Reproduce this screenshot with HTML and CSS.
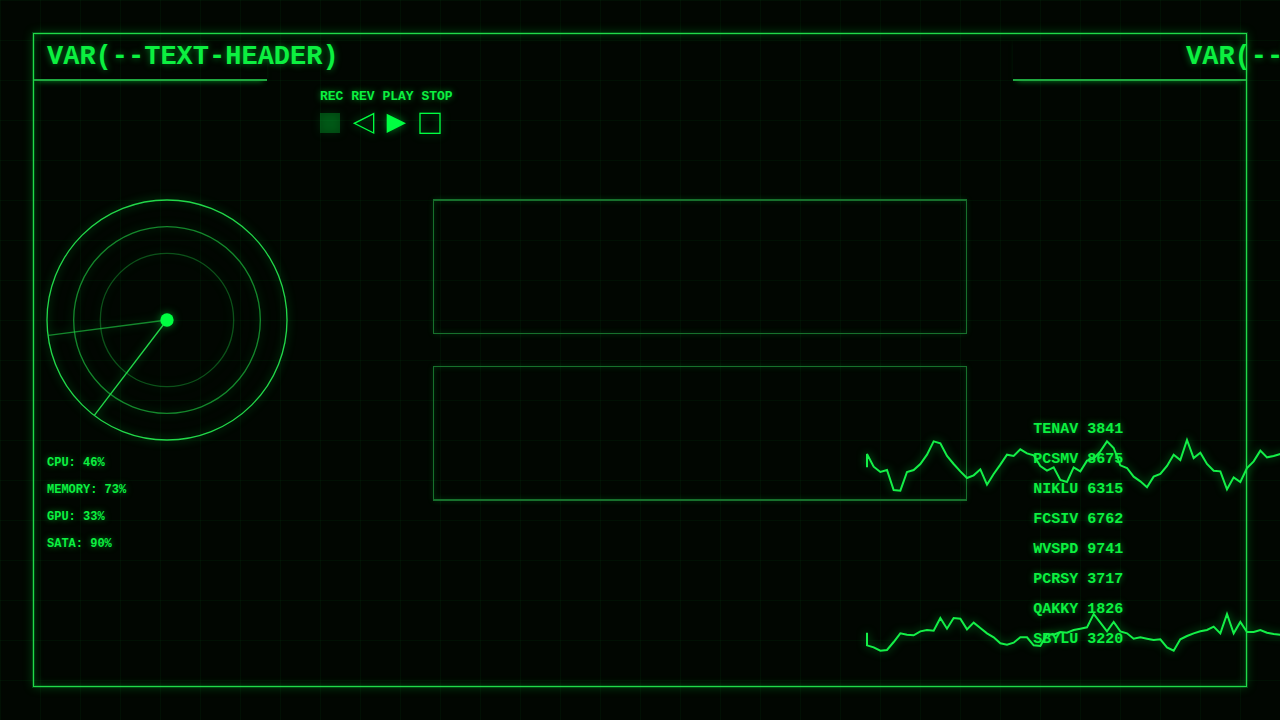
FILE: index.html
```html
<!DOCTYPE html>
<html lang="en">
<head>
<meta charset="utf-8">
<meta name="viewport" content="width=device-width, initial-scale=1">
<title>HUD Terminal</title>
<link rel="stylesheet" href="styles.css">
</head>
<body>
<div class="screen">
  <div class="frame">
    <header class="header">
      <h1 class="title">VAR(--TEXT-HEADER)</h1>
      <h2 class="title title-end">VAR(--TEXT-HEADER)</h2>
    </header>

    <section class="transport" aria-label="Transport">
      <p class="transport-labels">REC REV PLAY STOP</p>
      <div class="transport-buttons">
        <button class="key" type="button" aria-label="Record"><svg viewBox="0 0 30 30"><rect class="rec" width="30" height="30"/></svg></button>
        <button class="key" type="button" aria-label="Reverse"><svg viewBox="0 0 30 30"><path class="outline" d="M31 1V30L2 15.500Z"/></svg></button>
        <button class="key" type="button" aria-label="Play"><svg viewBox="0 0 30 30"><path class="solid" d="M1 1V30L30 15.500Z"/></svg></button>
        <button class="key" type="button" aria-label="Stop"><svg viewBox="0 0 30 30"><rect class="outline" x="1.500" y="0.500" width="30" height="30"/></svg></button>
      </div>
    </section>

    <main class="main">
      <section class="system">
        <svg class="radar" viewBox="0 0 360 360" role="img" aria-label="Radar">
          <circle class="ring" cx="180" cy="180" r="180"/>
          <circle class="ring ring-mid" cx="180" cy="180" r="140"/>
          <circle class="ring ring-inner" cx="180" cy="180" r="100"/>
          <path class="ring ring-mid" d="M180 180L2 203"/>
          <path class="ring" d="M180 180L71 323"/>
          <circle class="solid" cx="180" cy="180" r="10"/>
        </svg>
        <ul class="stats">
          <li>CPU: 46%</li>
          <li>MEMORY: 73%</li>
          <li>GPU: 33%</li>
          <li>SATA: 90%</li>
        </ul>
      </section>

      <section class="panels">
        <div class="panel"></div>
        <div class="panel"></div>
      </section>

      <ul class="codes">
        <li>TENAV 3841</li>
        <li>PCSMV 8675</li>
        <li>NIKLU 6315</li>
        <li>FCSIV 6762</li>
        <li>WVSPD 9741</li>
        <li>PCRSY 3717</li>
        <li>QAKKY 1826</li>
        <li>SBYLU 3220</li>
      </ul>

      <div class="waves" aria-hidden="true">
        <svg class="wave" viewBox="0 0 630 120"><polyline points="0,71 0,51 10,70 20,78 30,75 40,105 50,106 60,78 70,75 80,66 90,52 100,32 110,35 120,54 130,66 140,77 150,87 160,83 170,74 180,97 190,81 200,67 210,52 220,54 230,44 240,50 250,53 260,69 270,76 280,71 290,90 300,93 310,71 320,77 330,61 340,58 350,47 360,32 370,42 380,68 390,72 400,85 410,92 420,101 430,85 440,81 450,69 460,52 470,60 480,30 490,57 500,49 510,66 520,76 530,77 540,104 550,86 560,93 570,72 580,62 590,46 600,56 610,54 620,51 630,49"/></svg>
        <svg class="wave" viewBox="0 0 630 120"><polyline points="0,64 0,83 10,86 20,91 30,90 40,78 50,65 60,67 70,68 80,62 90,60 100,61 110,42 120,58 130,42 140,43 150,59 160,49 170,57 180,65 190,71 200,80 210,82 220,79 230,71 240,71 250,83 260,84 270,66 280,67 290,63 300,64 310,60 320,58 330,56 340,36 350,49 360,62 370,48 380,62 390,65 400,73 410,71 420,73 430,75 440,74 450,86 460,91 470,74 480,69 490,65 500,62 510,60 520,55 530,65 540,36 550,65 560,48 570,63 580,63 590,60 600,64 610,66 620,67 630,66"/></svg>
      </div>
    </main>
  </div>
</div>
</body>
</html>
```
FILE: styles.css
```css
:root {
  --green: #00ff41;
  --text: #0cf040;
  --line: #22d84a;
  --glow: rgba(0, 255, 65, 0.5);
}

* { box-sizing: border-box; }

body {
  margin: 0;
  background: #010601;
  color: var(--text);
  font-family: "Courier New", "Liberation Mono", monospace;
  font-weight: 700;
}

h1, h2, p, ul { margin: 0; padding: 0; }
ul { list-style: none; }

.screen {
  display: flex;
  min-height: 100vh;
  padding: 33px;
  overflow: hidden;
  background:
    linear-gradient(rgba(0, 255, 65, 0.04) 1px, transparent 1px) 0 0 / 40px 40px,
    linear-gradient(90deg, rgba(0, 255, 65, 0.04) 1px, transparent 1px) 0 0 / 40px 40px,
    #010601;
}

.frame {
  display: flex;
  flex: 1;
  flex-direction: column;
  min-width: 0;
  border: 1px solid var(--line);
  box-shadow:
    0 0 0 1px rgba(0, 255, 65, 0.2),
    0 0 10px rgba(0, 255, 65, 0.25),
    inset 0 0 0 1px rgba(0, 255, 65, 0.15),
    inset 0 0 10px rgba(0, 255, 65, 0.25);
}

.header {
  display: flex;
  justify-content: space-between;
}

.title {
  width: 233px;
  height: 47px;
  padding-left: 13px;
  border-bottom: 2px solid #1fa83f;
  box-shadow: 0 4px 6px -4px var(--glow);
  font-size: 27px;
  line-height: 46px;
  white-space: nowrap;
  text-shadow: 0 0 7px var(--glow);
}

.title-end { padding-left: 173px; }

.transport {
  display: grid;
  gap: 8px;
  padding: 8px 0 0 286px;
}

.transport-labels {
  font-size: 13px;
  line-height: 16px;
  text-shadow: 0 0 6px var(--glow);
}

.transport-buttons {
  display: flex;
  gap: 13px;
}

.key {
  width: 20px;
  height: 20px;
  padding: 0;
  border: 0;
  background: none;
}

.key svg, .radar, .wave {
  display: block;
  overflow: visible;
  filter: drop-shadow(0 0 4px var(--glow));
}

.rec { fill: var(--green); opacity: 0.24; }
.solid { fill: var(--green); }
.outline { fill: none; stroke: var(--green); stroke-width: 2; }

.main {
  position: relative;
  display: grid;
  flex: 1;
  grid-template-columns: 33fr 44fr 23fr;
  margin-top: 66px;
}

.system { padding-left: 12px; }

.radar { width: 240px; margin: 1px; }
.ring { fill: none; stroke: var(--line); stroke-width: 2; }
.ring-mid { opacity: 0.6; }
.ring-inner { opacity: 0.35; }

.stats {
  margin-top: 10px;
  padding-left: 1px;
  font-size: 12px;
  line-height: 27px;
  text-shadow: 0 0 6px var(--glow);
}

.panels {
  display: flex;
  flex-direction: column;
  gap: 32px;
  margin-left: -1px;
}

.panel {
  height: 135px;
  border: solid #17702c;
  border-width: 2px 1px 1px;
  box-shadow: 0 0 6px rgba(0, 255, 65, 0.15), inset 0 0 6px rgba(0, 255, 65, 0.15);
}

.panel + .panel { border-width: 1px 1px 2px; }

.codes {
  align-self: end;
  padding: 0 0 31px 66px;
  font-size: 15px;
  line-height: 30px;
  white-space: nowrap;
  text-shadow: 0 0 6px var(--glow);
}

/* Signal traces run over the panels and past the frame edge. */
.waves {
  position: absolute;
  top: 221px;
  left: 833px;
  display: grid;
  gap: 90px;
}

.wave { width: 420px; height: 80px; }
.wave polyline {
  fill: none;
  stroke: #14f048;
  stroke-width: 3;
}
```
